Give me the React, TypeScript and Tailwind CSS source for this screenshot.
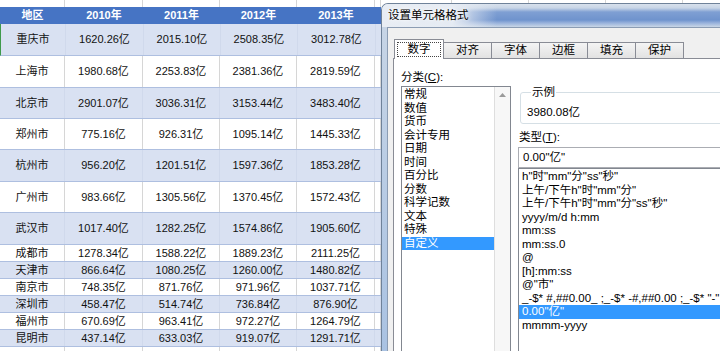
import React from "react";

const widths = ["w-[65px]", "w-[78px]", "w-[77px]", "w-[77px]", "w-[78px]", "w-[6px]"];

const data = [
  ["重庆市", "1620.26亿", "2015.10亿", "2508.35亿", "3012.78亿"],
  ["上海市", "1980.68亿", "2253.83亿", "2381.36亿", "2819.59亿"],
  ["北京市", "2901.07亿", "3036.31亿", "3153.44亿", "3483.40亿"],
  ["郑州市", "775.16亿", "926.31亿", "1095.14亿", "1445.33亿"],
  ["杭州市", "956.20亿", "1201.51亿", "1597.36亿", "1853.28亿"],
  ["广州市", "983.66亿", "1305.56亿", "1370.45亿", "1572.43亿"],
  ["武汉市", "1017.40亿", "1282.25亿", "1574.86亿", "1905.60亿"],
  ["成都市", "1278.34亿", "1588.22亿", "1889.23亿", "2111.25亿"],
  ["天津市", "866.64亿", "1080.25亿", "1260.00亿", "1480.82亿"],
  ["南京市", "748.35亿", "871.76亿", "971.96亿", "1037.71亿"],
  ["深圳市", "458.47亿", "514.74亿", "736.84亿", "876.90亿"],
  ["福州市", "670.69亿", "963.41亿", "972.27亿", "1264.79亿"],
  ["昆明市", "437.14亿", "633.03亿", "919.07亿", "1291.71亿"],
];

const heights = [
  "h-[32px]", "h-[32px]", "h-[31px]", "h-[31px]", "h-[32px]", "h-[31px]", "h-[32px]",
  "h-[17px]", "h-[17px]", "h-[17px]", "h-[17px]", "h-[17px]", "h-[17px]",
];

const categories = [
  "常规", "数值", "货币", "会计专用", "日期", "时间", "百分比",
  "分数", "科学记数", "文本", "特殊", "自定义",
];

const formats = [
  'h"时"mm"分"ss"秒"',
  '上午/下午h"时"mm"分"',
  '上午/下午h"时"mm"分"ss"秒"',
  "yyyy/m/d h:mm",
  "mm:ss",
  "mm:ss.0",
  "@",
  "[h]:mm:ss",
  '@"市"',
  '_-$* #,##0.00_ ;_-$* -#,##0.00 ;_-$* "-"',
  '0.00"亿"',
  "mmmm-yyyy",
];

const tabs = ["对齐", "字体", "边框", "填充", "保护"];

function SheetRow({ cells, height, blue, first }: { cells: string[]; height: string; blue: boolean; first?: boolean }) {
  return (
    <div
      className={`flex shrink-0 ${height} border-b border-[#aebfe0] ${blue ? "bg-[#d9e1f2]" : "bg-white"} ${
        first ? "border-l border-l-[#3f9a4c]" : ""
      }`}
    >
      {widths.map((w, i) => (
        <div
          key={i}
          className={`${w} shrink-0 flex items-center justify-center border-r ${
            blue ? "border-[#d0d9ec]" : "border-[#d6d6d6]"
          } text-[#111]`}
        >
          {cells[i] ?? ""}
        </div>
      ))}
    </div>
  );
}

function Sheet() {
  return (
    <div className="w-[381px] shrink-0 flex flex-col text-[11px] leading-none">
      <div className="h-[7px] flex shrink-0 bg-white">
        {widths.map((w, i) => (
          <div key={i} className={`${w} shrink-0 border-r border-[#d6d6d6]`} />
        ))}
      </div>
      <div className="h-[17px] flex shrink-0 bg-[#4674c4] text-white font-bold">
        {["地区", "2010年", "2011年", "2012年", "2013年", ""].map((t, i) => (
          <div key={i} className={`${widths[i]} shrink-0 flex items-center justify-center`}>
            {t}
          </div>
        ))}
      </div>
      {data.map((row, i) => (
        <SheetRow key={i} cells={row} height={heights[i]} blue={i % 2 === 0} first={i === 0} />
      ))}
      <SheetRow cells={[]} height="h-[12px]" blue={false} />
    </div>
  );
}

function Dialog() {
  return (
    <div className="flex-1 min-w-0 flex flex-col text-[11.5px] text-black">
      <div className="h-[3px] flex shrink-0 bg-white">
        {["w-[71px]", "w-[77px]", "w-[77px]", "w-[77px]"].map((w, i) => (
          <div key={i} className={`${w} shrink-0 border-r border-[#d6d6d6]`} />
        ))}
      </div>
      <div className="w-[420px] h-[420px] flex flex-col rounded-tl-[7px] border-l border-t border-[#6f8299] bg-[linear-gradient(180deg,#c9d6e6,#a9c2e2)] overflow-hidden">
        <div className="h-[23px] shrink-0 flex items-center pl-[6px] [background-image:linear-gradient(90deg,rgba(232,237,244,1)_0px,rgba(232,237,244,0.95)_70px,rgba(232,237,244,0)_115px),linear-gradient(180deg,#d8e1ec_0px,#c8d5e6_4px,#7f9fd3_8px,#6f93cd_16px,#98b2dc_19px,#c9d6e6_23px)]">
          <span className="[text-shadow:0_0_6px_#fff,0_0_3px_#fff]">设置单元格格式</span>
        </div>
        <div className="flex-1 flex pl-[5px]">
          <div className="flex-1 flex flex-col bg-[#f0f0f0] border-l border-t border-[#8b9cb3] pl-[5px] pt-[11px]">
            <div className="h-[19px] shrink-0 flex items-end">
              <div className="relative z-10 ml-[1px] -mb-px w-[50px] h-[20px] bg-white border border-b-0 border-[#898c95] p-[2px]">
                <div className="w-full h-full flex items-center justify-center border border-dotted border-[#444]">
                  数字
                </div>
              </div>
              {tabs.map((t) => (
                <div
                  key={t}
                  className="-ml-px w-[49px] h-[16px] flex items-center justify-center border border-b-0 border-[#898c95] bg-[linear-gradient(180deg,#f4f4f4,#e2e2e2)]"
                >
                  {t}
                </div>
              ))}
            </div>
            <div className="h-[320px] shrink-0 bg-white border border-[#898c95] flex pl-[7px]">
              <div className="w-[110px] shrink-0 flex flex-col pt-[11px]">
                <div className="leading-[14px]">
                  分类(<span className="underline">C</span>):
                </div>
                <div className="mt-[2px] flex-1 flex border border-[#828790]">
                  <div className="flex-1 pt-px">
                    {categories.map((c, i) => (
                      <div
                        key={c}
                        className={`leading-[13.5px] h-[13.5px] pl-[2px] whitespace-nowrap ${
                          i === 11 ? "bg-[#3399ff] text-white" : ""
                        }`}
                      >
                        {c}
                      </div>
                    ))}
                  </div>
                  <div className="w-[16px] shrink-0 bg-[#f7f7f7] border-l border-[#dedede]">
                    <div className="h-[16px] flex items-center justify-center">
                      <svg width="7" height="4" viewBox="0 0 7 4">
                        <path d="M0 4 L3.5 0 L7 4 Z" fill="#9a9a9a" />
                      </svg>
                    </div>
                  </div>
                </div>
              </div>
              <div className="flex-1 min-w-0 flex flex-col ml-[7px] pt-[27px]">
                <fieldset className="ml-[2px] h-[38px] shrink-0 border border-[#d5dfe5] rounded-[3px] pl-[6px]">
                  <legend className="ml-[4px] px-px leading-[13px]">示例</legend>
                  <div className="pt-[7px] leading-[13px]">3980.08亿</div>
                </fieldset>
                <div className="mt-[6px] pl-px leading-[14px]">
                  类型(<span className="underline">T</span>):
                </div>
                <div className="mt-[3px] h-[21px] shrink-0 flex items-center pl-[4px] border border-[#abadb3]">
                  0.00"亿"
                </div>
                <div className="flex-1 border border-[#828790] pt-px">
                  {formats.map((f, i) => (
                    <div
                      key={f}
                      className={`leading-[13.5px] h-[13.5px] pl-[3px] whitespace-nowrap ${
                        i === 10 ? "bg-[#3399ff] text-white" : ""
                      }`}
                    >
                      {f}
                    </div>
                  ))}
                </div>
              </div>
            </div>
          </div>
        </div>
      </div>
    </div>
  );
}

export default function App() {
  return (
    <div className="w-[720px] h-[351px] overflow-hidden flex bg-white font-['Liberation_Sans','Noto_Sans_CJK_SC',sans-serif]">
      <Sheet />
      <Dialog />
    </div>
  );
}
